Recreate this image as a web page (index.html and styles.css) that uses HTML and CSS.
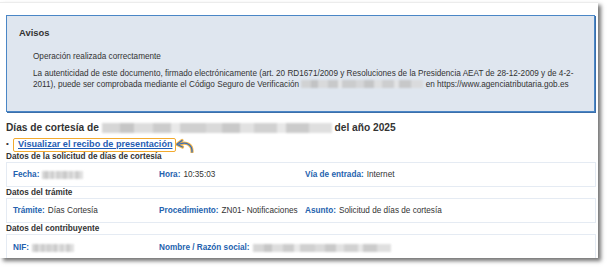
FILE: index.html
```html
<!DOCTYPE html>
<html lang="es">
<head>
<meta charset="utf-8">
<title>Días de cortesía</title>
<link rel="stylesheet" href="styles.css">
</head>
<body>
<div class="page">
  <div class="avisos">
    <div class="avisos-title">Avisos</div>
    <div class="avisos-body">
      <p class="msg">Operación realizada correctamente</p>
      <p class="msg-long">La autenticidad de este documento, firmado electrónicamente (art. 20 RD1671/2009 y Resoluciones de la Presidencia AEAT de 28-12-2009 y de 4-2-<br>2011), puede ser comprobada mediante el Código Seguro de Verificación <span class="blur blur-csv"></span> en https://www.agenciatributaria.gob.es</p>
    </div>
  </div>

  <h1 class="title">Días de cortesía de <span class="blur blur-name"></span> del año 2025</h1>

  <div class="link-line">
    <span class="bullet">•</span>
    <a class="link-box" href="#">Visualizar el recibo de presentación</a>
    <svg class="arrow" width="20" height="16" viewBox="0 0 20 16">
      <path d="M17 15 C17.5 8 12 4.5 4.5 7" fill="none" stroke="#f3b84e" stroke-width="3.2" stroke-linecap="round"/>
      <path d="M7 3.5 L2 7.3 L7.5 10" fill="none" stroke="#f3b84e" stroke-width="3.2" stroke-linecap="round" stroke-linejoin="round"/>
      <path d="M17 15 C17.5 8 12 4.5 4.5 7" fill="none" stroke="#3c6db5" stroke-width="1.3" stroke-linecap="round"/>
      <path d="M7 3.5 L2 7.3 L7.5 10" fill="none" stroke="#3c6db5" stroke-width="1.3" stroke-linecap="round" stroke-linejoin="round"/>
    </svg>
  </div>

  <div class="section-title">Datos de la solicitud de días de cortesía</div>
  <div class="row">
    <div class="cell"><span class="label">Fecha:</span> <span class="blur blur-date"></span></div>
    <div class="cell"><span class="label">Hora:</span> 10:35:03</div>
    <div class="cell"><span class="label">Vía de entrada:</span> Internet</div>
    <div class="cell"></div>
  </div>

  <div class="section-title">Datos del trámite</div>
  <div class="row">
    <div class="cell"><span class="label">Trámite:</span> Días Cortesía</div>
    <div class="cell"><span class="label">Procedimiento:</span> ZN01- Notificaciones</div>
    <div class="cell wide"><span class="label">Asunto:</span> Solicitud de días de cortesía</div>
  </div>

  <div class="section-title">Datos del contribuyente</div>
  <div class="row">
    <div class="cell"><span class="label">NIF:</span> <span class="blur blur-nif"></span></div>
    <div class="cell wide3"><span class="label">Nombre / Razón social:</span> <span class="blur blur-razon"></span></div>
  </div>
</div>
</body>
</html>
```

FILE: styles.css
```css
* { box-sizing: border-box; }

html, body {
  margin: 0;
  padding: 0;
  background: #ffffff;
}

body {
  font-family: "Liberation Sans", Arial, sans-serif;
  color: #333333;
  width: 611px;
  height: 271px;
  overflow: hidden;
}

.page {
  width: 598px;
  height: 256px;
  margin-top: 2px;
  padding: 0 6px;
  background: #ffffff;
  border-top: 1px solid #ececec;
  box-shadow: 3px 3px 4px rgba(0, 0, 0, 0.55);
  overflow: hidden;
}

.avisos {
  margin-top: 12px;
  height: 97px;
  width: 589px;
  background: #dfe6ef;
  border: 1px solid #4a86c6;
  box-shadow: 1px 1px 0 #3b6faa;
  padding: 11px 12px 0 12px;
}

.avisos-title {
  font-size: 9.4px;
  font-weight: bold;
  line-height: 11px;
  color: #333;
}

.avisos-body {
  padding-left: 14px;
  margin-top: 13px;
}

.msg, .msg-long {
  margin: 0;
  font-size: 8.2px;
  line-height: 11px;
  color: #333;
}

.msg-long {
  margin-top: 7px;
  line-height: 10.6px;
}

.title {
  margin: 9px 0 0 0;
  font-size: 10.2px;
  font-weight: bold;
  line-height: 13px;
  color: #333;
}

.link-line {
  display: flex;
  align-items: center;
  height: 17px;
}

.bullet {
  font-size: 8px;
  width: 7px;
  color: #333;
  line-height: 10px;
  margin-top: 3px;
}

.link-box {
  display: inline-block;
  height: 14px;
  line-height: 11px;
  padding: 0 2px 0 4px;
  border: 1.5px solid #f2aa2f;
  border-radius: 2px;
  font-size: 9.1px;
  font-weight: bold;
  color: #1f5cb3;
  text-decoration: underline;
  margin-top: 4px;
}

.arrow {
  display: block;
  margin-left: -1px;
  margin-top: 5px;
}

.section-title {
  font-size: 8.2px;
  font-weight: bold;
  line-height: 11px;
  color: #333;
}

.row {
  display: grid;
  grid-template-columns: 146px 146px 146px 1fr;
  align-items: center;
  width: 590px;
  height: 25px;
  border: 1px solid #e5ebf3;
  background: #ffffff;
  padding-left: 6px;
  font-size: 8.2px;
  color: #333;
}

.row:last-child {
  height: 27px;
}

.cell {
  white-space: nowrap;
  display: flex;
  align-items: center;
  gap: 3px;
}

.cell.wide { grid-column: span 2; }
.cell.wide3 { grid-column: span 3; }

.label {
  color: #2462ae;
  font-weight: bold;
}

.blur {
  display: inline-block;
  height: 8px;
  vertical-align: middle;
  filter: blur(1.1px);
  opacity: 0.85;
  background:
    linear-gradient(90deg,
      #cfcfcf 0 8%, #bdbdbd 8% 14%, #d8d8d8 14% 22%, #c4c4c4 22% 30%,
      #e6e6e6 30% 34%, #c8c8c8 34% 45%, #d4d4d4 45% 52%, #c0c0c0 52% 60%,
      #dedede 60% 66%, #cacaca 66% 76%, #e4e4e4 76% 80%, #c3c3c3 80% 90%, #dadada 90% 100%);
}

.blur-csv { width: 122px; height: 8px; }
.blur-name { width: 230px; height: 10px; }
.blur-date { width: 41px; }
.blur-nif { width: 42px; }
.blur-razon { width: 138px; }
```
